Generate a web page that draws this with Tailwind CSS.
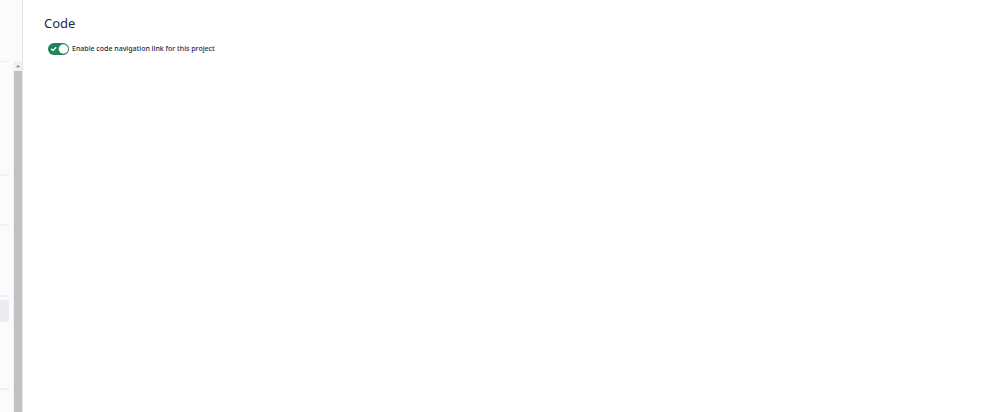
<!DOCTYPE html>
<html lang="en">
<head>
  <meta charset="UTF-8">
  <meta name="viewport" content="width=device-width, initial-scale=1.0">
  <title>Code settings</title>
  <script src="https://cdn.jsdelivr.net/npm/@tailwindcss/browser@4"></script>
</head>
<body class="flex min-h-screen bg-white font-['Noto_Sans',sans-serif] text-[#172b4d]">
  <!-- Sidebar -->
  <aside class="flex w-[23px] shrink-0 flex-col border-r border-[#e4e5e8] bg-[#fafbfc]">
    <div class="h-[61px]"></div>
    <div class="flex grow">
      <nav class="flex w-[9px] shrink-0 flex-col" aria-label="Project settings">
        <hr class="border-[#ebecf0]">
        <div class="h-[112px]"></div>
        <hr class="border-t-2 border-[#f0f1f4]">
        <div class="h-[48px]"></div>
        <hr class="border-t-2 border-[#f0f1f4]">
        <div class="h-[69px]"></div>
        <hr class="border-t-2 border-[#f0f1f4]">
        <a href="#" aria-label="Code" class="mt-[3px] block h-[22px] rounded-r-xs bg-[#ebecf0]"></a>
        <div class="h-[66px]"></div>
        <hr class="border-t-2 border-[#f0f1f4]">
      </nav>
      <!-- Scrollbar -->
      <div class="ml-1 flex w-[9px] flex-col bg-[#f1f1f1]">
        <div class="flex h-[10px] items-center justify-center">
          <svg class="h-1 w-1" viewBox="0 0 4 4" fill="#8a8a8a"><path d="M2 .8 4 3.2H0z"/></svg>
        </div>
        <div class="ml-px grow bg-[#c1c1c1]"></div>
      </div>
    </div>
  </aside>

  <!-- Main content -->
  <main class="min-w-0 grow px-[21px] pt-[15px]">
    <h1 class="text-[13px] leading-4">Code</h1>
    <label class="mt-[11px] ml-1 flex w-fit items-center">
      <span class="relative flex">
        <input type="checkbox" role="switch" checked class="peer h-3 w-[21px] appearance-none rounded-full bg-[#1f845a]">
        <svg class="pointer-events-none absolute inset-0 h-3 w-[21px]" viewBox="0 0 21 12" fill="none">
          <path d="M3.2 5.8 5 7.5 8.2 4.2" stroke="white" stroke-width="1.5"/>
          <circle cx="15.4" cy="6" r="4.7" fill="white"/>
        </svg>
      </span>
      <span class="ml-[3px] text-[7px] leading-[14px] font-medium">Enable code navigation link for this project</span>
    </label>
  </main>
</body>
</html>
